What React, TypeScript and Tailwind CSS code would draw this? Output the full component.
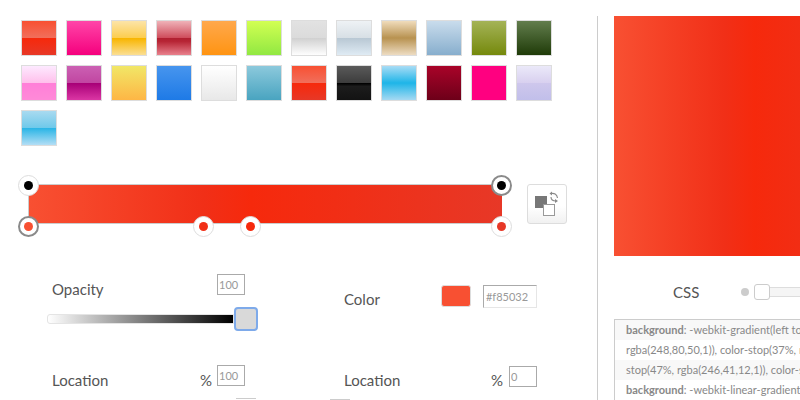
const swatches = [
  "bg-[linear-gradient(#f85032,#f16f5c_50%,#f6290c_51%,#f02f17_71%,#e73827)]",
  "bg-[linear-gradient(#ff45a8,#f5007d)]",
  "bg-[linear-gradient(#fce4a8,#fccd4d_50%,#f8b500_51%,#fbdf93)]",
  "bg-[linear-gradient(#efb2b8,#cf4d5c_49%,#b01f30_50%,#b72535_60%,#e8808c)]",
  "bg-[linear-gradient(#ffa84c,#ff9412)]",
  "bg-[linear-gradient(#d2ff52,#91e842)]",
  "bg-[linear-gradient(#e2e2e2,#dbdbdb_50%,#d1d1d1_51%,#fefefe)]",
  "bg-[linear-gradient(#eef2f5,#d7dfe5_50%,#b9c8d4_51%,#dfebf4)]",
  "bg-[linear-gradient(#f0dcbc,#b89250_50%,#eddcc2)]",
  "bg-[linear-gradient(#c9dcec,#87aecd)]",
  "bg-[linear-gradient(#a4b357,#75890c)]",
  "bg-[linear-gradient(#627d4d,#1f3b08)]",
  "bg-[linear-gradient(#fdeaff,#ffbfeb_50%,#ff7fd8_51%,#ff8ad8)]",
  "bg-[linear-gradient(#cb60b3,#c146a1_50%,#a80077_51%,#db36a4)]",
  "bg-[linear-gradient(#f1e767,#feb645)]",
  "bg-[linear-gradient(#4795ee,#1e7ae6)]",
  "bg-[linear-gradient(#ffffff,#e8e8e8)]",
  "bg-[linear-gradient(#8cc9dc,#49a4c0)]",
  "bg-[linear-gradient(#f85032,#f16f5c_50%,#f6290c_51%,#f02f17_71%,#e73827)]",
  "bg-[linear-gradient(#5a5a5a,#3c3c3c_50%,#000000_51%,#1c1c1c_60%,#131313)]",
  "bg-[linear-gradient(#a8dcf5,#1eb5e8_50%,#a5d9f2)]",
  "bg-[linear-gradient(#a90329,#6d0019)]",
  "bg-[#ff0080]",
  "bg-[linear-gradient(#ebe9f9,#d8d0ef_50%,#cec7ec_51%,#c1bfea)]",
  "bg-[linear-gradient(#a9daf0,#6ec9ea_50%,#2bb5e6_51%,#b3def5)]",
]

const barGradient = "bg-[linear-gradient(to_right,#f85032,#f12f17_37%,#f6290c_47%,#e73827)]"

function Handle({ className, dot, active }: { className: string; dot: string; active?: boolean }) {
  return (
    <div
      className={`absolute flex h-[21px] w-[21px] items-center justify-center rounded-full bg-white ${
        active ? "border-2 border-[#8a8a8a]" : "border border-[#dddddd]"
      } ${className}`}
    >
      <div className={`h-[9px] w-[9px] rounded-full ${dot}`} />
    </div>
  )
}

function SmallInput({ value }: { value: string }) {
  return (
    <input
      readOnly
      value={value}
      className="h-[21px] w-[28px] border border-[#aaaaaa] px-[1px] text-[11px] text-[#999999] outline-none"
    />
  )
}

function CodeRow({ children, shaded }: { children: React.ReactNode; shaded?: boolean }) {
  return (
    <div className={`h-5 whitespace-nowrap pl-[11px] text-[11px] leading-5 text-[#888888] ${shaded ? "bg-[#f8f8f8]" : "bg-white"}`}>
      {children}
    </div>
  )
}

export default function App() {
  return (
    <div className="flex h-[400px] w-[800px] overflow-hidden bg-white font-['Lato',sans-serif]">
      <div className="w-[597px] shrink-0 pt-5">
        {/* swatches */}
        <div className="ml-[21px] grid grid-cols-[repeat(12,36px)] gap-[9px]">
          {swatches.map((s, i) => (
            <div key={i} className={`h-9 w-9 border border-[#dddddd] ${s}`} />
          ))}
        </div>

        {/* gradient bar */}
        <div className="mt-[38px] flex items-start">
          <div className={`relative ml-[28px] h-10 w-[474px] border-y border-l border-[#cccccc] ${barGradient}`}>
            <Handle className="left-[-11px] top-[-10px]" dot="bg-black" />
            <Handle className="right-[-10px] top-[-10px]" dot="bg-black" active />
            <Handle className="left-[-11px] top-[31px]" dot="bg-[#f85032]" active />
            <Handle className="left-[164px] top-[31px]" dot="bg-[#f12f17]" />
            <Handle className="left-[211px] top-[31px]" dot="bg-[#f6290c]" />
            <Handle className="right-[-10px] top-[31px]" dot="bg-[#e73827]" />
          </div>
          <button className="ml-[25px] flex h-10 w-10 items-center justify-center rounded-[3px] border border-[#dddddd] bg-[linear-gradient(#ffffff_55%,#f1f1f1)]">
            <svg width="26" height="26" viewBox="0 0 26 26">
              <rect x="1" y="5" width="12" height="12" fill="#777777" />
              <rect x="9.5" y="13.5" width="11" height="11" fill="#ffffff" stroke="#999999" />
              <path d="M17 2.5C20 2 23 3 23.5 7M17 6C17 9 20 10 22 10" fill="none" stroke="#888888" strokeWidth="1.1" />
              <path d="M18 .5 15.5 2.5 18 4.5ZM21 8 24 10 21 12Z" fill="#888888" />
            </svg>
          </button>
        </div>

        {/* controls */}
        <div className="ml-[47px] mt-[50px] grid grid-cols-[297px_193px] text-[15px] text-[#555555]">
          <div>
            <div className="flex h-[21px] w-[198px] justify-between pl-[5px]">
              <span className="mt-[5px] leading-5">Opacity</span>
              <SmallInput value="100" />
            </div>
            <div className="mt-3 flex h-6 w-[211px] items-center">
              <div className="h-[10px] flex-1 rounded-l-[3px] border border-[#e4e4e4] bg-[linear-gradient(to_right,#ffffff,#000000)]" />
              <div className="h-6 w-6 rounded-[4px] border-2 border-[#7eaaea] bg-[#d9d9d9]" />
            </div>
            <div className="mt-[34px] flex h-[21px] w-[198px] pl-[5px]">
              <span className="mt-[5px] leading-5">Location</span>
              <span className="ml-auto mr-[5px] mt-[5px] leading-5">%</span>
              <SmallInput value="100" />
            </div>
            <div className="ml-[189px] mt-3 h-px w-5 bg-[#cccccc]" />
          </div>
          <div>
            <div className="mt-[11px] flex items-start">
              <span className="mt-1 leading-5">Color</span>
              <div className="ml-[61px] h-[22px] w-[30px] rounded-[3px] border border-[#dddddd] bg-[#f85032]" />
              <input
                readOnly
                value="#f85032"
                className="ml-3 h-[23px] w-[54px] border border-[#e6e6e6] border-l-[#aaaaaa] border-t-[#aaaaaa] px-[2px] text-[11px] text-[#999999] outline-none"
              />
            </div>
            <div className="mt-[57px] flex h-[21px] w-[193px]">
              <span className="mt-1 leading-5">Location</span>
              <span className="ml-auto mr-[6px] mt-1 leading-5">%</span>
              <SmallInput value="0" />
            </div>
            <div className="ml-[-14px] mt-3 h-px w-5 bg-[#cccccc]" />
          </div>
        </div>
      </div>

      {/* preview column */}
      <div className="mt-4 min-w-0 flex-1 border-l border-[#cccccc] pl-4">
        <div className={`h-[240px] w-[300px] ${barGradient}`} />
        <div className="mt-[26px] flex h-5 items-center">
          <span className="ml-[59px] text-[15px] text-[#555555]">CSS</span>
          <span className="ml-[42px] h-2 w-2 shrink-0 rounded-full bg-[#cccccc]" />
          <div className="ml-[5px] flex h-4 w-[200px] shrink-0 items-center">
            <div className="h-4 w-4 shrink-0 rounded-[3px] border border-[#cccccc] bg-white" />
            <div className="h-[10px] flex-1 border-y border-[#dddddd] bg-[#f5f5f5]" />
          </div>
        </div>
        <div className="mt-[17px] w-[300px] border border-[#cccccc]">
          <CodeRow shaded><b>background</b>: -webkit-gradient(left top, right top, color-stop(0%,</CodeRow>
          <CodeRow>rgba(248,80,50,1)), color-stop(37%, rgba(241,47,23,1)), color-</CodeRow>
          <CodeRow shaded>stop(47%, rgba(246,41,12,1)), color-stop(100%, rgba(231,56,39,1)));</CodeRow>
          <CodeRow><b>background</b>: -webkit-linear-gradient(left, rgba(248,80,50,1) 0%);</CodeRow>
        </div>
      </div>
    </div>
  )
}
